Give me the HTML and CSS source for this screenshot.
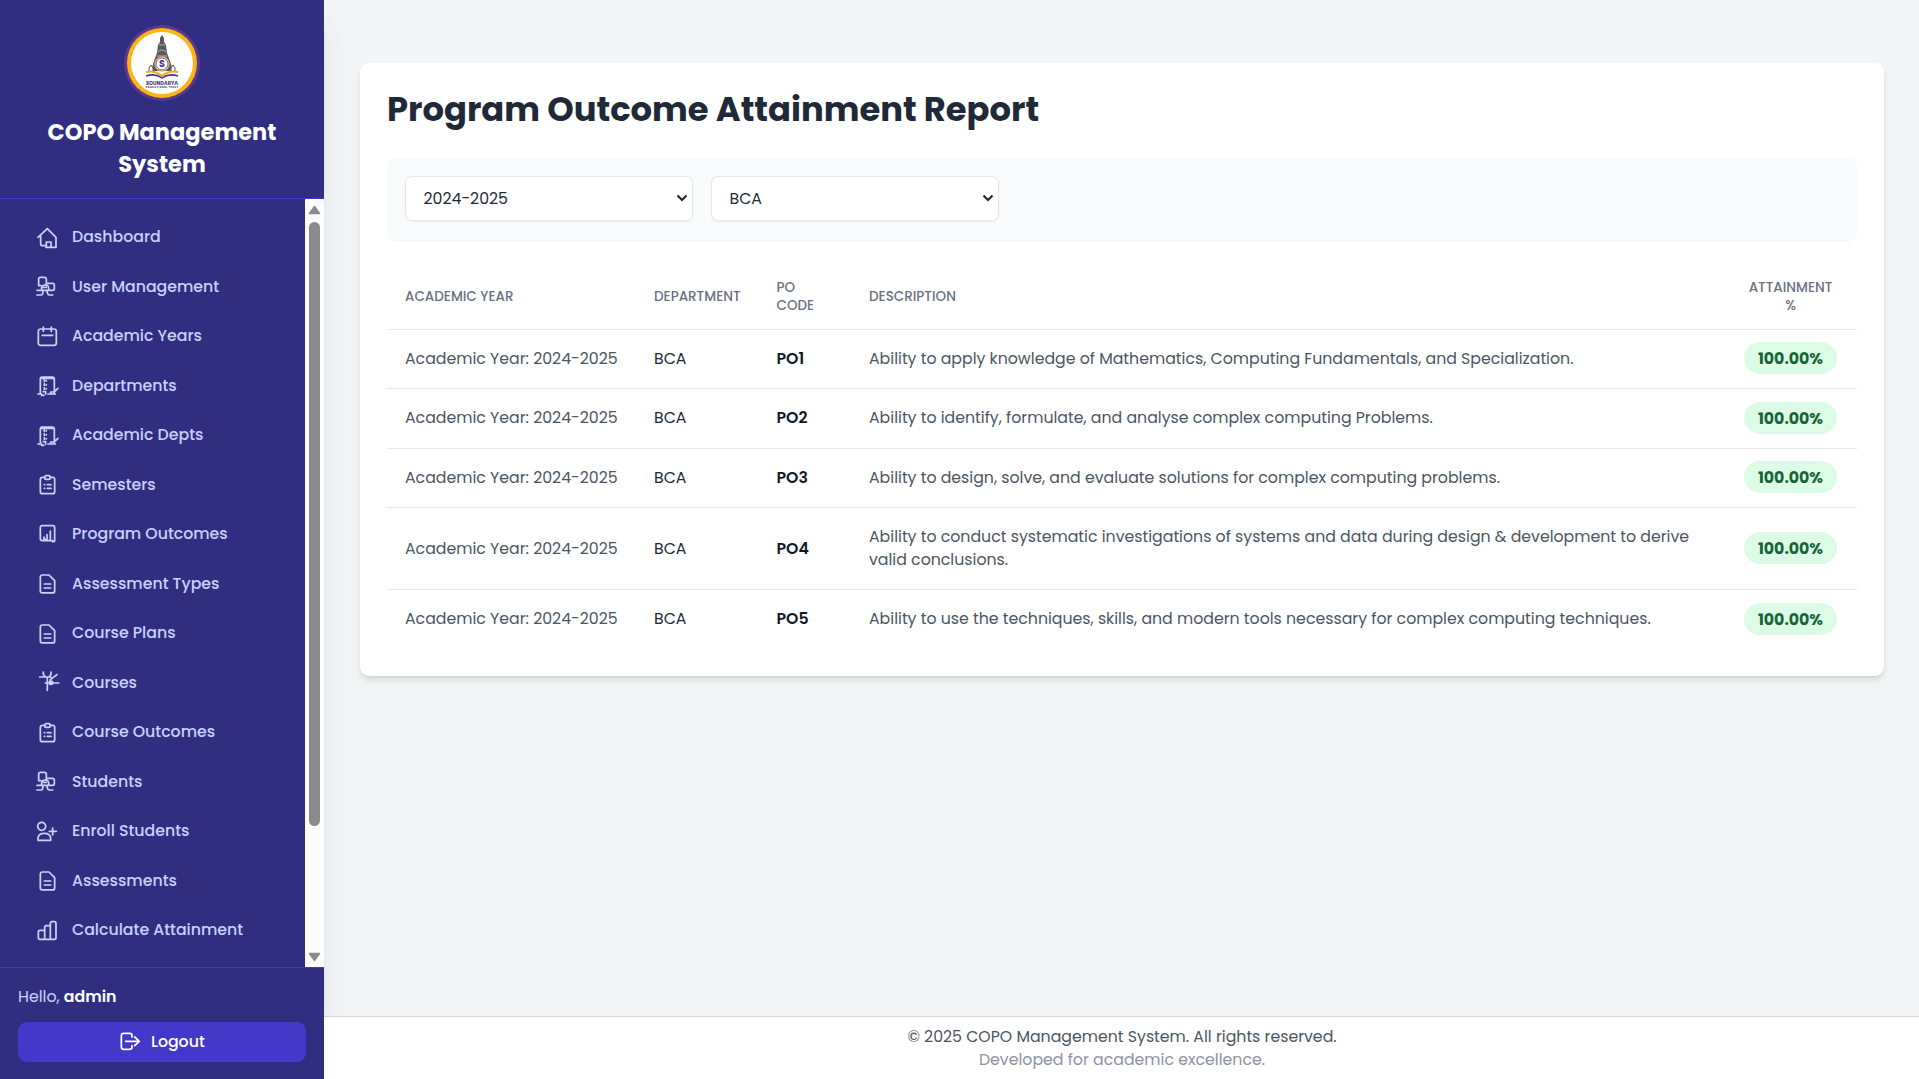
FILE: index.html
```html
<!DOCTYPE html>
<html lang="en">
<head>
<meta charset="utf-8">
<title>COPO Management System</title>
<link rel="stylesheet" href="styles.css">
</head>
<body>
<svg class="sprite" width="0" height="0" aria-hidden="true">
  <symbol id="i-home" viewBox="0 0 68 68"><path d="M6 31 34 5 60 31V61H30M31 61V45H45V61M14 27V51Q14 56 18 56H27"/></symbol>
  <symbol id="i-users" viewBox="0 0 68 68"><path d="M8 29V9Q8 4 13 4H25Q31 4 31 10V26M8 29H14M31 22H49Q55 22 55 27V38Q55 43 49 43H38M17 43V37Q17 27 27 27 38 27 38 37V43M3 43H42M3 57H15Q21 57 21 44M33 44Q34 57 40 57H50M23 34H31"/></symbol>
  <symbol id="i-calendar" viewBox="0 0 68 68"><rect x="7" y="9" width="54" height="49" rx="7"/><path d="M22 3V16M46 3V16M19 28H50"/></symbol>
  <symbol id="i-building" viewBox="0 0 68 68"><path d="M13 57V12Q13 6 18 6H49Q55 6 55 12V56M13 10H54M25 13V19M25 26V31M25 38V43M31 17V18M31 29V30M31 41V42M22 50H29V57M6 57H17V61H24M36 57H58M44 57V51H54L66 40"/></symbol>
  <symbol id="i-clipboard" viewBox="0 0 68 68"><path d="M26 10H19Q13 10 13 16V53Q13 59 19 59H50Q56 59 56 53V16Q56 10 50 10H43"/><rect x="26" y="5" width="17" height="11" rx="5"/><path d="M25 32H26M25 43H26M34 32H45M34 43H45"/></symbol>
  <symbol id="i-report" viewBox="0 0 68 68"><path d="M50 52V50H19Q13 50 13 44V11Q13 5 19 5H50Q56 5 56 11V50Q56 53 50 53M24 39V46M33 32V46M43 21V46M24 46H33"/></symbol>
  <symbol id="i-doc" viewBox="0 0 68 68"><path d="M19 6H39L56 23V54Q56 60 50 60H19Q13 60 13 54V12Q13 6 19 6ZM25 33H44M25 45H44"/></symbol>
  <symbol id="i-course" viewBox="0 0 68 68"><path d="M11 15H45M22 0V7L27 14M45 0V7L40 14M34 15V55M28 33H68M63 8 43 23V33"/><circle class="dot" cx="45" cy="32" r="5"/></symbol>
  <symbol id="i-enroll" viewBox="0 0 68 68"><circle cx="17" cy="16" r="12"/><path d="M6 58V52Q7 37 25 37T44 52V58ZM40 31H61M50 21V42"/></symbol>
  <symbol id="i-bars" viewBox="0 0 68 68"><path d="M26 58H12Q7 58 7 53V36Q7 31 12 31H26M26 58V23Q26 17 31 17H43M26 58H43M43 58V11Q43 5 48 5H55Q60 5 60 11V53Q60 58 55 58H43"/></symbol>
  <symbol id="i-logout" viewBox="0 0 68 68"><path d="M39 18V14Q39 7 32 7H14Q7 7 7 14V48Q7 55 14 55H32Q39 55 39 48V44M20 31H61M47 18 61 31 47 44"/></symbol>
</svg>
<div class="app">
  <aside class="sidebar">
    <header class="brand">
      <svg class="logo" viewBox="0 0 76 76" aria-label="Soundarya Educational Trust">
        <circle cx="38" cy="38" r="38" fill="#5b3a8e"/>
        <circle cx="38" cy="38" r="35" fill="#fdb515"/>
        <circle cx="38" cy="38" r="31" fill="#fff"/>
        <path d="M36 13 38 10 40 13V17L42 20 43 28 46 36 49 46H27L30 36 33 28 34 20 36 17Z" fill="#58595b"/>
        <path d="M35 20H41M34 27Q38 23 42 27M33 31H43" fill="none" stroke="#c9c9cb" stroke-width=".8"/>
        <path d="M25 47V43L27 40 29 43V47M47 47V43L49 40 51 43V47" fill="#fff" stroke="#58595b"/>
        <path d="M22 47Q31 45 38 51 45 45 54 47" fill="none" stroke="#f5a81c" stroke-width="2"/>
        <path d="M22 51Q31 48 38 53 45 48 54 51" fill="none" stroke="#45368f" stroke-width="1.5"/>
        <circle cx="38" cy="39" r="7.2" fill="#fff" stroke="#e9a23b" stroke-width="1"/>
        <circle cx="38" cy="39" r="6" fill="#fff" stroke="#45368f" stroke-width=".8"/>
        <text x="38" y="42.3" class="logo-letter">S</text>
        <text x="38" y="59.5" class="logo-name" textLength="32">SOUNDARYA</text>
        <text x="38" y="62.6" class="logo-sub" textLength="32">EDUCATIONAL TRUST</text>
      </svg>
      <h2>COPO Management System</h2>
    </header>
    <div class="nav-wrap">
      <nav>
        <a><svg><use href="#i-home"/></svg>Dashboard</a>
        <a><svg><use href="#i-users"/></svg>User Management</a>
        <a><svg><use href="#i-calendar"/></svg>Academic Years</a>
        <a><svg><use href="#i-building"/></svg>Departments</a>
        <a><svg><use href="#i-building"/></svg>Academic Depts</a>
        <a><svg><use href="#i-clipboard"/></svg>Semesters</a>
        <a><svg><use href="#i-report"/></svg>Program Outcomes</a>
        <a><svg><use href="#i-doc"/></svg>Assessment Types</a>
        <a><svg><use href="#i-doc"/></svg>Course Plans</a>
        <a><svg><use href="#i-course"/></svg>Courses</a>
        <a><svg><use href="#i-clipboard"/></svg>Course Outcomes</a>
        <a><svg><use href="#i-users"/></svg>Students</a>
        <a><svg><use href="#i-enroll"/></svg>Enroll Students</a>
        <a><svg><use href="#i-doc"/></svg>Assessments</a>
        <a><svg><use href="#i-bars"/></svg>Calculate Attainment</a>
      </nav>
      <div class="scrollbar">
        <svg viewBox="0 0 13 10"><path d="M6.5 1.5 11.5 8.5H1.5Z"/></svg>
        <div class="track"><div class="thumb"></div></div>
        <svg viewBox="0 0 13 10"><path d="M6.5 8.5 11.5 1.5H1.5Z"/></svg>
      </div>
    </div>
    <footer class="account">
      <p>Hello, <b>admin</b></p>
      <button><svg><use href="#i-logout"/></svg>Logout</button>
    </footer>
  </aside>
  <div class="page">
    <main>
      <section class="card">
        <h1>Program Outcome Attainment Report</h1>
        <div class="filters">
          <select><option>2024-2025</option></select>
          <select><option>BCA</option></select>
        </div>
        <table>
          <colgroup><col class="c-year"><col class="c-dept"><col class="c-code"><col><col class="c-att"></colgroup>
          <thead><tr><th>Academic Year</th><th>Department</th><th>PO Code</th><th>Description</th><th class="center">Attainment<br>%</th></tr></thead>
          <tbody>
            <tr><td class="year">Academic Year: 2024-2025</td><td class="dept">BCA</td><td class="code">PO1</td><td>Ability to apply knowledge of Mathematics, Computing Fundamentals, and Specialization.</td><td class="center"><span class="badge">100.00%</span></td></tr>
            <tr><td class="year">Academic Year: 2024-2025</td><td class="dept">BCA</td><td class="code">PO2</td><td>Ability to identify, formulate, and analyse complex computing Problems.</td><td class="center"><span class="badge">100.00%</span></td></tr>
            <tr><td class="year">Academic Year: 2024-2025</td><td class="dept">BCA</td><td class="code">PO3</td><td>Ability to design, solve, and evaluate solutions for complex computing problems.</td><td class="center"><span class="badge">100.00%</span></td></tr>
            <tr><td class="year">Academic Year: 2024-2025</td><td class="dept">BCA</td><td class="code">PO4</td><td>Ability to conduct systematic investigations of systems and data during design &amp; development to derive valid conclusions.</td><td class="center"><span class="badge">100.00%</span></td></tr>
            <tr><td class="year">Academic Year: 2024-2025</td><td class="dept">BCA</td><td class="code">PO5</td><td>Ability to use the techniques, skills, and modern tools necessary for complex computing techniques.</td><td class="center"><span class="badge">100.00%</span></td></tr>
          </tbody>
        </table>
      </section>
    </main>
    <footer class="site-footer">
      <p>© 2025 COPO Management System. All rights reserved.</p>
      <p class="muted">Developed for academic excellence.</p>
    </footer>
  </div>
</div>
</body>
</html>
```
FILE: styles.css
```css
*{box-sizing:border-box;margin:0;padding:0}
html{font-size:18px}
body{font:400 15.75px/22.5px Poppins,Inter,sans-serif;background:#f3f4f6;color:#1f2937;overflow:hidden}
.sprite{display:block;position:absolute}
.app{display:flex;height:100vh}

.sidebar{width:324px;flex:none;display:flex;flex-direction:column;background:#312e81;color:#c7d2fe;box-shadow:0 22px 28px -6px rgba(0,0,0,.1),0 9px 11px -7px rgba(0,0,0,.1)}
.brand{height:199px;flex:none;padding:25px 27px 0;display:flex;flex-direction:column;align-items:center;gap:16px;border-bottom:1px solid #4338ca;text-align:center}
.brand h2{font-size:22.5px;line-height:31.5px;font-weight:700;color:#fff}
.logo{width:76px;height:76px;flex:none}
.logo text{text-anchor:middle;fill:#45368f;font-weight:700}
.logo-letter{font-size:9.5px}
.logo-name{font-size:5px}
.logo text.logo-sub{font-size:2.6px;fill:#58595b}

.nav-wrap{flex:1;min-height:0;display:flex}
nav{flex:1;padding:13.5px 18px;overflow:hidden}
nav a{display:flex;align-items:center;height:49.5px;padding-left:18px;gap:13.5px;font-weight:500}
nav svg,.account svg{width:22.67px;height:22.67px;flex:none;overflow:visible;fill:none;stroke:currentColor;stroke-width:5.2;stroke-linecap:round;stroke-linejoin:round}
nav svg{margin-right:-.17px;position:relative;top:1px}
symbol{overflow:visible}
.dot{fill:currentColor}
.scrollbar{width:19px;background:#fcfcfc;display:flex;flex-direction:column;align-items:center;padding:6px 0 5px}
.scrollbar svg{width:13px;height:10px;fill:#8b8b8b;stroke:#8b8b8b;stroke-width:1.5;stroke-linejoin:round}
.track{flex:1;padding-top:7px}
.thumb{width:11px;height:604px;border-radius:6px;background:#8b8b8b}

.account{height:112px;flex:none;border-top:1px solid #4338ca;padding:18px}
.account b{font-weight:600;color:#fff}
.account p{margin-bottom:13.5px}
.account button{width:100%;height:40px;border:0;border-radius:9px;background:#4338ca;color:#fff;font:500 15.75px/22.5px Poppins,Inter,sans-serif;display:flex;align-items:center;justify-content:center;gap:9px}

.page{flex:1;min-width:0;display:flex;flex-direction:column}
main{flex:1;padding:63px 35px 0 36px}
.card{background:#fff;border-radius:9px;padding:27px;box-shadow:0 4.5px 6.75px -1px rgba(0,0,0,.1),0 2px 4.5px -2px rgba(0,0,0,.1)}
h1{font-size:33.75px;line-height:40.5px;font-weight:700}
.filters{margin-top:27px;height:82px;display:flex;align-items:flex-start;gap:18px;padding:18px;background:#f9fafb;border-radius:9px;box-shadow:0 1px 2px rgba(0,0,0,.05)}
select{appearance:none;width:288px;height:45px;padding:2px 17.5px 0;border:1px solid #e5e7eb;border-radius:7px;background:#fff url("data:image/svg+xml,%3Csvg xmlns='http://www.w3.org/2000/svg' width='12' height='8' fill='none' stroke='%231f2937' stroke-width='2.2'%3E%3Cpath d='M1.5 1.5 6 6 10.5 1.5'/%3E%3C/svg%3E") no-repeat right 4px center;color:#1f2937;font:400 15.75px/22.5px Poppins,Inter,sans-serif;box-shadow:0 1px 2px rgba(0,0,0,.05)}

table{width:100%;margin-top:24.8px;border-collapse:separate;border-spacing:0;table-layout:fixed}
.c-year{width:249px}
.c-dept{width:122.5px}
.c-code{width:92.5px}
.c-att{width:135px}
th{height:65.5px;padding:0 18px;text-align:left;font-size:13.5px;line-height:18px;font-weight:500;color:#6b7280;text-transform:uppercase}
td{padding:18px;color:#4b5563;vertical-align:middle}
th,tbody tr:not(:last-child) td{border-bottom:1px solid #e5e7eb}
.center{text-align:center;padding-left:19px;padding-right:17px}
td.year{white-space:nowrap}
td.dept{color:#1f2937}
td.code{color:#111827;font-weight:600}
.badge{padding:4.5px 13.5px;border-radius:99px;background:#dcfce7;color:#166534;font-weight:700}

.site-footer{height:63px;padding:9px 0 0 1px;background:#fff;border-top:1px solid #d1d5db;text-align:center;color:#4b5563}
.muted{color:#8d93a0}
```
